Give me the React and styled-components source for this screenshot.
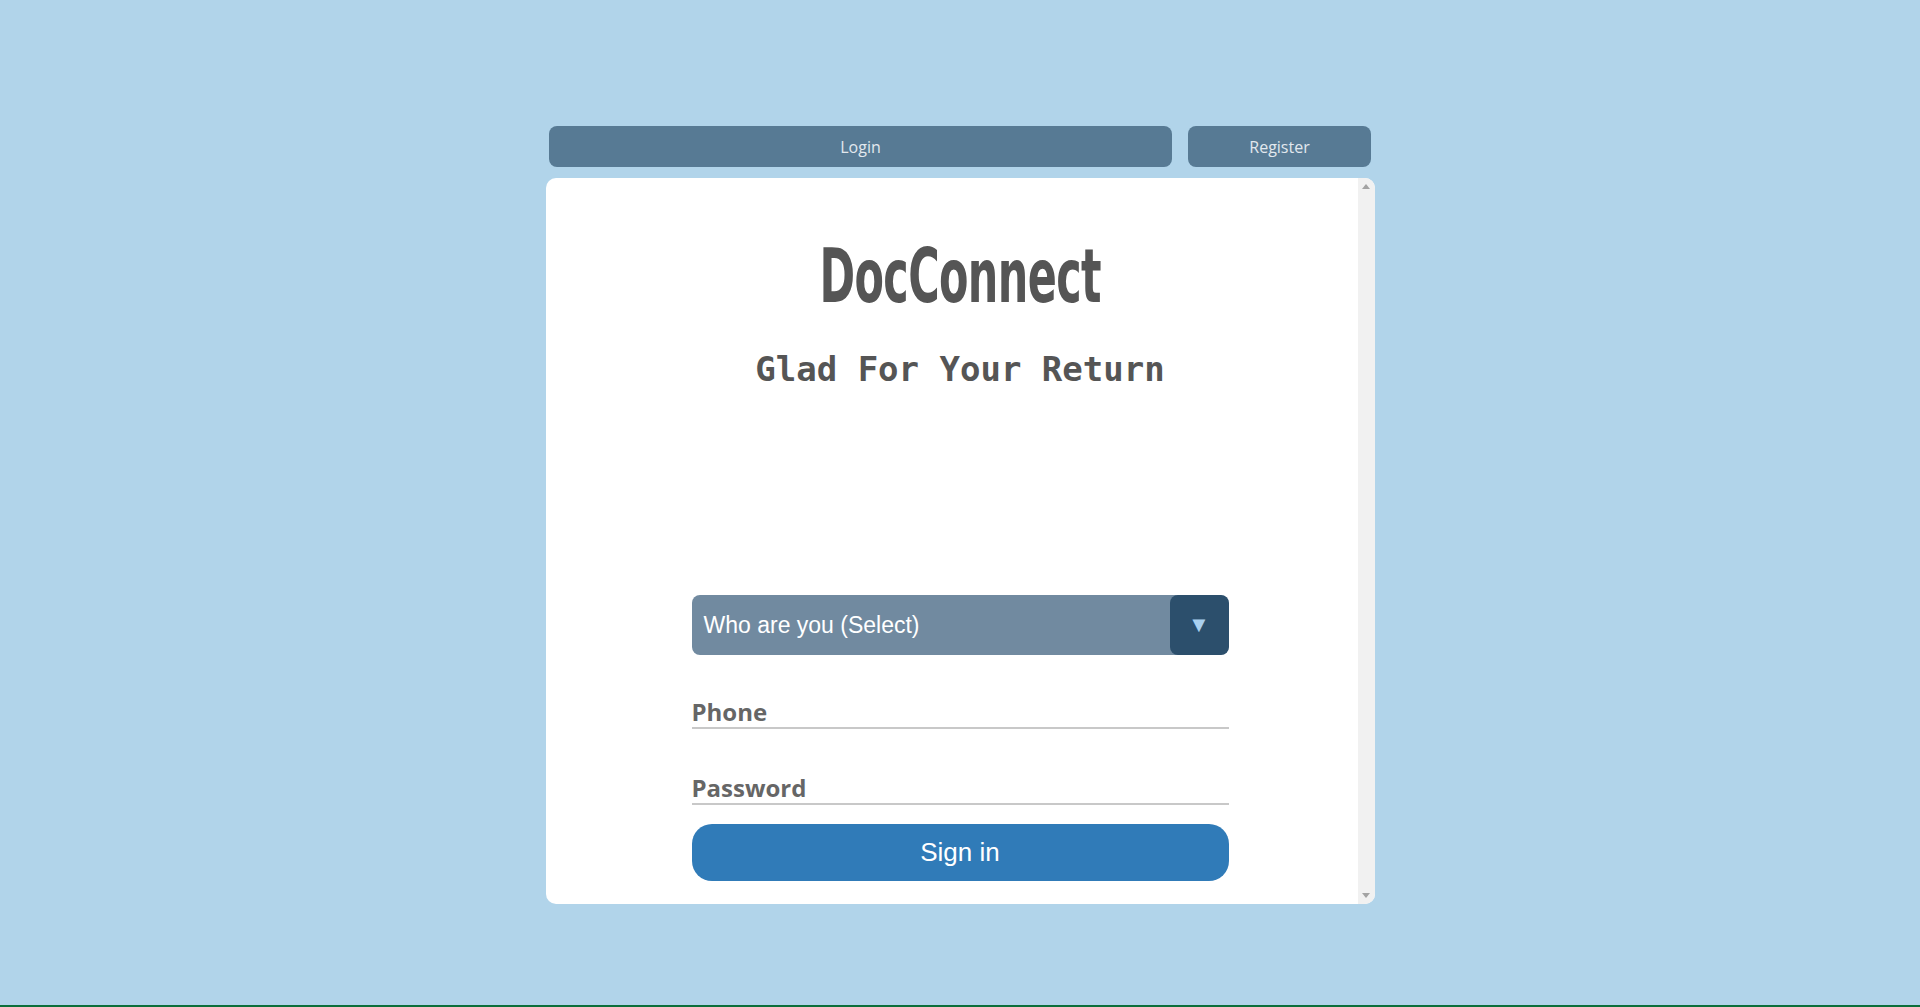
import React from 'react';
import styled, { createGlobalStyle } from 'styled-components';

const GlobalStyle = createGlobalStyle`
  * { box-sizing: border-box; }
  body {
    margin: 0;
    background-color: #b1d4ea;
    font-family: "Liberation Sans", Arial, sans-serif;
  }
`

const StyledPage = styled.div`
  min-height: 100vh;
  display: flex;
  flex-direction: column;
`
const StyledMain = styled.main`
  flex: 1;
  display: flex;
  flex-direction: column;
  align-items: center;
  padding-top: 126px;
`
const StyledTabs = styled.div`
  width: 822px;
  display: flex;
  gap: 16px;
  margin-bottom: 11px;
`
const StyledTab = styled.button`
  width: ${props => props.width}px;
  height: 41px;
  border: none;
  border-radius: 8px;
  background-color: #577a94;
  color: #e2e8ee;
  font-family: "Open Sans", "Noto Sans", sans-serif;
  font-size: 16px;
  cursor: pointer;
`
const StyledCard = styled.div`
  width: 829px;
  height: 726px;
  display: flex;
  background-color: #fff;
  border-radius: 10px;
  overflow: hidden;
`
const StyledContent = styled.div`
  flex: 1;
  padding: 0 0 22px 146px;
`
const StyledScrollbar = styled.div`
  width: 17px;
  display: flex;
  flex-direction: column;
  justify-content: space-between;
  background-color: #f1f1f1;
`
const StyledScrollArrow = styled.div`
  height: 17px;
  display: flex;
  align-items: center;
  justify-content: center;
  svg {
    display: block;
  }
`
const StyledForm = styled.form`
  width: 537px;
  display: flex;
  flex-direction: column;
`
const StyledTitle = styled.h1`
  margin: 56px 0 0;
  text-align: center;
  font-family: "DejaVu Sans Condensed", "DejaVu Sans", sans-serif;
  font-weight: 700;
  font-size: 74px;
  line-height: 84px;
  letter-spacing: -1px;
  color: #555;
  span {
    display: inline-block;
    transform: scaleX(0.645);
  }
`
const StyledSubtitle = styled.h2`
  margin: 31px 0 0;
  text-align: center;
  font-family: "DejaVu Sans Mono", "Liberation Mono", monospace;
  font-weight: 700;
  font-size: 34px;
  line-height: 40px;
  color: #555;
`
const StyledSelect = styled.div`
  margin-top: 206px;
  height: 60px;
  display: flex;
  border-radius: 8px;
  overflow: hidden;
  background-color: #718aa0;
`
const StyledSelectText = styled.span`
  flex: 1;
  display: flex;
  align-items: center;
  padding-left: 12px;
  font-size: 23px;
  color: #fff;
`
const StyledArrow = styled.span`
  width: 59px;
  display: flex;
  align-items: center;
  justify-content: center;
  background-color: #2c4f6c;
  color: #a9d0ef;
  font-size: 22px;
  border-radius: 8px;
`
const StyledInput = styled.input`
  margin-top: ${props => props.gap || 40}px;
  height: 34px;
  border: none;
  border-bottom: 2px solid #c8c8c8;
  padding: 0;
  outline: none;
  font-family: "Open Sans", "Noto Sans", sans-serif;
  font-weight: 700;
  font-size: 24px;
  color: #555;
  &::placeholder {
    color: #666;
  }
`
const StyledSubmit = styled.button`
  margin-top: 19px;
  height: 57px;
  border: none;
  border-radius: 20px;
  background-color: #307bb8;
  color: #fff;
  font-family: "Liberation Sans", Arial, sans-serif;
  font-size: 26px;
  cursor: pointer;
`
const StyledFooter = styled.footer`
  height: 2px;
  background-color: #0b6e3b;
`

function ScrollArrow({ up }) {
  return (
    <StyledScrollArrow>
      <svg width="8" height="5" viewBox="0 0 8 5">
        <path d={up ? 'M4 0L8 5H0z' : 'M0 0H8L4 5z'} fill="#a3a3a3" />
      </svg>
    </StyledScrollArrow>
  );
}

function App() {
  return (
    <StyledPage>
      <GlobalStyle />
      <StyledMain>
        <StyledTabs>
          <StyledTab width={623}>Login</StyledTab>
          <StyledTab width={183}>Register</StyledTab>
        </StyledTabs>
        <StyledCard>
          <StyledContent>
            <StyledForm onSubmit={(e) => e.preventDefault()}>
              <StyledTitle><span>DocConnect</span></StyledTitle>
              <StyledSubtitle>Glad For Your Return</StyledSubtitle>
              <StyledSelect>
                <StyledSelectText>Who are you (Select)</StyledSelectText>
                <StyledArrow>▼</StyledArrow>
              </StyledSelect>
              <StyledInput type="tel" placeholder="Phone" />
              <StyledInput type="password" placeholder="Password" gap={42} />
              <StyledSubmit type="submit">Sign in</StyledSubmit>
            </StyledForm>
          </StyledContent>
          <StyledScrollbar>
            <ScrollArrow up />
            <ScrollArrow />
          </StyledScrollbar>
        </StyledCard>
      </StyledMain>
      <StyledFooter />
    </StyledPage>
  );
}

export default App;
